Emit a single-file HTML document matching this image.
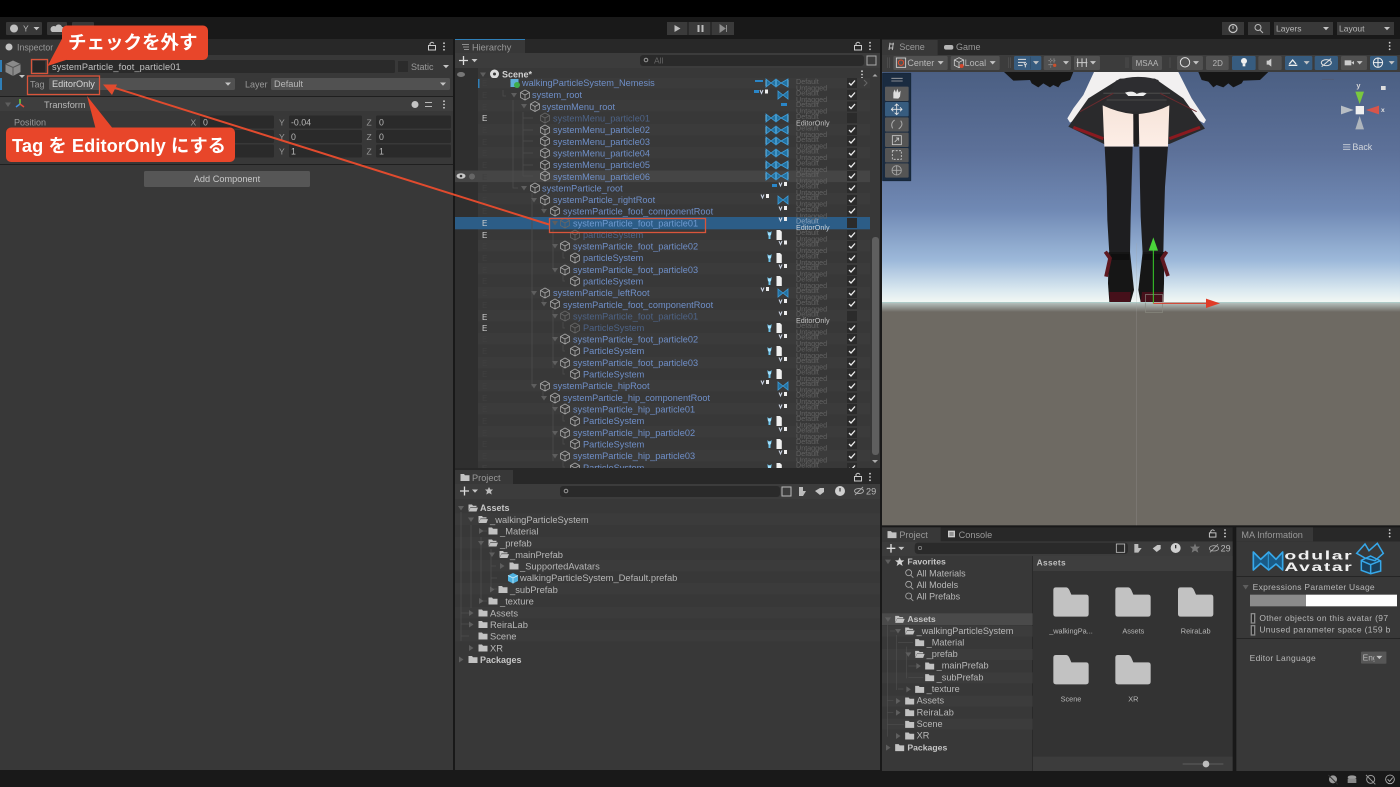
<!DOCTYPE html>
<html><head><meta charset="utf-8"><style>
html,body{margin:0;padding:0;background:#000;width:1400px;height:787px;overflow:hidden}
svg{display:block;filter:blur(.35px)}
text{font-family:"Liberation Sans","Noto Sans CJK JP",sans-serif;fill:#b8b8b8;font-size:9px;white-space:pre}
.b text,text.b{fill:#6f8fc8;font-size:9.200px}
.d text,text.d{fill:#4d6387;font-size:9.200px}
.t text{fill:#626262;font-size:7.200px}
.w{fill:#c2c2c2}
.g{fill:#999}
</style></head><body>
<svg width="1400" height="787" viewBox="0 0 1400 787" xmlns="http://www.w3.org/2000/svg">
<defs>
<symbol id="cube" overflow="visible"><path d="M0-5L4.500-2.500V2.500L0 5L-4.500 2.500V-2.500ZM-4.500-2.500L0 0L4.500-2.500M0 0V5" fill="none" stroke="#a6a6a6" stroke-width=".8"/></symbol>
<symbol id="cubed" overflow="visible"><path d="M0-5L4.500-2.500V2.500L0 5L-4.500 2.500V-2.500ZM-4.500-2.500L0 0L4.500-2.500M0 0V5" fill="none" stroke="#666" stroke-width=".8"/></symbol>
<symbol id="cb" overflow="visible"><rect x="-5" y="-5" width="10" height="10" fill="#2b2b2b"/><path d="M-3 0L-1 2L3-2.500" fill="none" stroke="#eee" stroke-width="1.300"/></symbol>
<symbol id="cu" overflow="visible"><rect x="-5" y="-5" width="10" height="10" fill="#2b2b2b"/></symbol>
<symbol id="bow2" overflow="visible"><path d="M-11-4L-6 0L-1-4L4 0L11-4V4L4 0L-1 4L-6 0L-11 4Z" fill="#22709f" stroke="#3f9fdc" stroke-width=".8"/><path d="M-11-3V3M11-3V3M-1-3V3" stroke="#6abcec" stroke-width="1"/></symbol>
<symbol id="bow" overflow="visible"><path d="M-5-4L0 0L5-4V4L0 0L-5 4Z" fill="#22709f" stroke="#3f9fdc" stroke-width=".8"/></symbol>
<symbol id="vd" overflow="visible"><path d="M-4-2.500L-2.500 1L-1-2.500" fill="none" stroke="#cfd8e8" stroke-width="1"/><rect x="1" y="-3" width="3" height="4" fill="#eee"/></symbol>
<symbol id="yd" overflow="visible"><path d="M-9-4L-7-2L-5-4V-2L-6 0V4H-8V0L-9-2Z" fill="#6cc4ec" transform="translate(1.500 0)"/><circle cx="-5.500" cy="-1" r="1.700" fill="#9fe0ff"/><path d="M-1.500-5H2L3.800-3.200V5H-1.500Z" fill="#f0f0f0" transform="translate(3 0)"/></symbol>
<symbol id="fold" overflow="visible"><path d="M-4.500-3.500H-1L0-2.300H4.500V3.500H-4.500Z" fill="#c2c2c2"/></symbol>
<symbol id="fopen" overflow="visible"><path d="M-4.500-3.500H-1L0-2.300H3.500V-1H-2.500L-4.500 3ZM-4.500 3.500L-2.500-.4H5L3.500 3.500Z" fill="#c2c2c2"/></symbol>
<symbol id="td" overflow="visible"><path d="M-3-2H3L0 2.500Z" fill="#5e5e5e"/></symbol>
<symbol id="tr" overflow="visible"><path d="M-2-3V3L2.500 0Z" fill="#5e5e5e"/></symbol>
<symbol id="dd" overflow="visible"><path d="M-3-1.500H3L0 1.800Z" fill="#c4c4c4"/></symbol>
<symbol id="kb" overflow="visible"><circle cx="0" cy="-3.300" r=".9" fill="#d0d0d0"/><circle cx="0" cy="0" r=".9" fill="#d0d0d0"/><circle cx="0" cy="3.300" r=".9" fill="#d0d0d0"/></symbol>
<symbol id="lock" overflow="visible"><rect x="-3.500" y="-.5" width="7" height="4.500" fill="none" stroke="#ccc"/><path d="M-2-.5V-2.500Q0-5 2-2.500" fill="none" stroke="#ccc"/></symbol>
<clipPath id="hc"><rect x="455" y="78" width="425" height="390"/></clipPath>
<linearGradient id="sky" x1="0" y1="0" x2="0" y2="1"><stop offset="0" stop-color="#4b5f83"/><stop offset=".35" stop-color="#5d7199"/><stop offset=".6" stop-color="#7089b4"/><stop offset=".82" stop-color="#9db9da"/><stop offset=".95" stop-color="#dbe9f0"/><stop offset="1" stop-color="#f2f7f4"/></linearGradient>
<linearGradient id="gr" x1="0" y1="0" x2="0" y2="1"><stop offset="0" stop-color="#bcc8c6"/><stop offset="1" stop-color="#6e6a63"/></linearGradient>
<linearGradient id="sk" x1="0" y1="0" x2="0" y2="1"><stop offset="0" stop-color="#f6e4da"/><stop offset="1" stop-color="#fdeee6"/></linearGradient>
</defs>

<rect width="1400" height="787" fill="#191919"/>
<rect width="1400" height="17" fill="#000"/>

<!-- top toolbar -->
<rect x="6" y="22" width="36" height="13" rx="1" fill="#383838"/><circle cx="14" cy="28.500" r="4" fill="#c0c0c0"/><text x="23" y="31.500" style="font-size:8.500px" fill="#aaa">Y</text><use href="#dd" x="36.500" y="28.500"/>
<rect x="47" y="22" width="20" height="13" rx="1" fill="#383838"/><path d="M52 32h10a2.500 2.500 0 0 0 0-5a3.500 3.500 0 0 0-6.500-.5a2.800 2.800 0 0 0-3.500 5.500z" fill="#c0c0c0"/>
<rect x="72" y="22" width="22" height="13" rx="1" fill="#383838"/>
<rect x="667" y="22" width="67" height="13" fill="#3a3a3a"/><path d="M688 22v13M711 22v13" stroke="#191919"/>
<path d="M674.500 25v7l6-3.500z" fill="#bdbdbd"/><path d="M698.500 25v7M702.500 25v7" stroke="#bdbdbd" stroke-width="2"/><path d="M720 25v7l5-3.500zM726.500 25v7" fill="#8c8c8c" stroke="#8c8c8c"/>
<rect x="1222" y="22" width="22" height="13" fill="#383838"/><circle cx="1233" cy="28.500" r="4" fill="none" stroke="#c4c4c4" stroke-width="1.200"/><path d="M1233 26v3" stroke="#c4c4c4"/>
<rect x="1248" y="22" width="22" height="13" fill="#383838"/><circle cx="1258" cy="27.500" r="3" fill="none" stroke="#bbb"/><path d="M1260 30l3 3" stroke="#bbb"/>
<rect x="1274" y="22" width="59" height="13" fill="#383838"/><text x="1276" y="31.500" style="font-size:8.500px">Layers</text><use href="#dd" x="1326" y="28.500"/>
<rect x="1337" y="22" width="57" height="13" fill="#383838"/><text x="1339" y="31.500" style="font-size:8.500px">Layout</text><use href="#dd" x="1387" y="28.500"/>

<!-- inspector -->
<rect x="0" y="39" width="453" height="731" fill="#383838"/>
<rect x="0" y="39" width="453" height="16" fill="#282828"/>
<rect x="0" y="40" width="62" height="15" fill="#383838"/>
<circle cx="9" cy="47" r="3.500" fill="#c4c4c4"/>
<text x="17" y="50.500" style="font-size:8.800px" class="g">Inspector</text>
<use href="#lock" x="432" y="46"/><use href="#kb" x="444" y="46.500"/>
<rect x="0" y="60" width="2" height="12" fill="#2f7fb8"/><rect x="0" y="78" width="2" height="12" fill="#2f7fb8"/>
<path d="M13 60.500l7.500 3.500v8l-7.500 4l-7.500-4v-8z" fill="#8a8a8a"/><path d="M5.500 64l7.500 3.500l7.500-3.500M13 67.500v8.500" stroke="#555" fill="none"/>
<path d="M19 75h6l-3 3z" fill="#c4c4c4"/>
<rect x="33" y="61" width="12" height="11" fill="#262626"/>
<rect x="49" y="60" width="346" height="13" rx="1.500" fill="#2a2a2a"/>
<text x="52" y="70" style="font-size:9.200px;letter-spacing:.12px" class="w">systemParticle_foot_particle01</text>
<rect x="398" y="61" width="10" height="11" fill="#2b2b2b"/>
<text x="411" y="70" style="font-size:9px" class="g">Static</text><use href="#dd" x="446" y="66.500"/>
<text x="30" y="87.500" style="font-size:9px" class="g">Tag</text>
<rect x="49" y="78" width="186" height="12" rx="1.500" fill="#515151"/>
<text x="52" y="87" style="font-size:9.200px;fill:#d8d8d8">EditorOnly</text><use href="#dd" x="228" y="84"/>
<text x="245" y="87.500" style="font-size:9px" class="g">Layer</text>
<rect x="271" y="78" width="179" height="12" rx="1.500" fill="#515151"/>
<text x="274" y="87" style="font-size:9.200px">Default</text><use href="#dd" x="443" y="84"/>
<rect x="0" y="96" width="453" height="1" fill="#1f1f1f"/>
<rect x="0" y="97" width="453" height="14" fill="#3e3e3e"/>
<use href="#td" x="8" y="104.500"/>
<path d="M20 99v5" stroke="#6fcf3c" stroke-width="1.500"/><path d="M20 104l-4 3" stroke="#3f8fe0" stroke-width="1.500"/><path d="M20 104l4 3" stroke="#e04a3c" stroke-width="1.500"/>
<text x="44" y="108" style="font-size:9.200px">Transform</text>
<circle cx="415" cy="104.500" r="3.500" fill="#c4c4c4"/><path d="M425 102.500h7M425 106.500h7" stroke="#b8b8b8"/><use href="#kb" x="444" y="104.500"/>
<text x="14" y="125.500" style="font-size:9px" class="g">Position</text>
<g fill="#2a2a2a">
<rect x="200" y="115.500" width="74" height="13" rx="1.500"/><rect x="289" y="115.500" width="73" height="13" rx="1.500"/><rect x="376" y="115.500" width="75" height="13" rx="1.500"/>
<rect x="200" y="130" width="74" height="13" rx="1.500"/><rect x="289" y="130" width="73" height="13" rx="1.500"/><rect x="376" y="130" width="75" height="13" rx="1.500"/>
<rect x="200" y="144.500" width="74" height="13" rx="1.500"/><rect x="289" y="144.500" width="73" height="13" rx="1.500"/><rect x="376" y="144.500" width="75" height="13" rx="1.500"/>
</g>
<text x="190.500" y="125.500" style="font-size:8.500px" class="g">X</text><text x="203" y="125.500" style="font-size:8.800px">0</text>
<text x="279" y="125.500" style="font-size:8.500px" class="g">Y</text><text x="291" y="125.500" style="font-size:8.800px">-0.04</text>
<text x="366.500" y="125.500" style="font-size:8.500px" class="g">Z</text><text x="379" y="125.500" style="font-size:8.800px">0</text>
<text x="279" y="140" style="font-size:8.500px" class="g">Y</text><text x="291" y="140" style="font-size:8.800px">0</text>
<text x="366.500" y="140" style="font-size:8.500px" class="g">Z</text><text x="379" y="140" style="font-size:8.800px">0</text>
<text x="279" y="154.500" style="font-size:8.500px" class="g">Y</text><text x="291" y="154.500" style="font-size:8.800px">1</text>
<text x="366.500" y="154.500" style="font-size:8.500px" class="g">Z</text><text x="379" y="154.500" style="font-size:8.800px">1</text>
<rect x="0" y="164" width="453" height="1" fill="#1f1f1f"/>
<rect x="144" y="171" width="166" height="16" rx="1.500" fill="#565656"/>
<text x="227" y="182" text-anchor="middle" style="font-size:9.200px;fill:#c8c8c8">Add Component</text>

<!-- hierarchy -->
<rect x="455" y="39" width="425" height="431" fill="#383838"/>
<rect x="455" y="39" width="425" height="14" fill="#282828"/>
<rect x="455" y="40" width="70" height="13" fill="#383838"/><rect x="455" y="39" width="70" height="1" fill="#2f7fb8"/>
<path d="M462 44.500h7M463 47h6M464 49.500h5" stroke="#aaa" stroke-width=".8"/>
<text x="472" y="50.500" style="font-size:9.200px" class="g">Hierarchy</text>
<use href="#lock" x="858" y="46"/><use href="#kb" x="870" y="46"/>
<rect x="455" y="53" width="425" height="15" fill="#3c3c3c"/>
<path d="M459 60.500h9M463.500 56v9" stroke="#ddd" stroke-width="1.300"/><use href="#dd" x="474.500" y="60.500"/>
<rect x="640" y="55" width="224" height="11" rx="3" fill="#2a2a2a"/>
<circle cx="646" cy="60" r="1.800" fill="none" stroke="#999"/><text x="654" y="63.500" style="font-size:8.500px;fill:#666">All</text>
<rect x="867" y="56" width="9" height="9" fill="none" stroke="#aaa"/>
<rect x="455" y="68" width="425" height="10" fill="#383838"/>
<rect x="455" y="68" width="23" height="402" fill="#2f2f2f"/>
<ellipse cx="461" cy="74.500" rx="4" ry="2.500" fill="#777"/>
<use href="#td" x="483" y="74.500"/>
<circle cx="494.500" cy="74" r="4.500" fill="#ddd"/><circle cx="494.500" cy="74" r="1.500" fill="#383838"/>
<text x="502" y="77.500" style="font-size:9px;fill:#d2d2d2;font-weight:bold">Scene*</text>
<use href="#kb" x="862" y="74.500"/>
<path d="M875 74l-2.500 2.500h5z" fill="#aaa"/>
<rect x="872" y="237" width="7" height="218" rx="3" fill="#5f5f5f"/>
<path d="M872 460h6l-3 3z" fill="#aaa"/>

<g clip-path="url(#hc)">
<g fill="#3b3b3b">
<rect x="478" y="77" width="392" height="11.600"/><rect x="478" y="100" width="392" height="11.600"/><rect x="478" y="124" width="392" height="11.600"/><rect x="478" y="147" width="392" height="11.600"/><rect x="478" y="193" width="392" height="11.600"/><rect x="478" y="240" width="392" height="11.600"/><rect x="478" y="263" width="392" height="11.600"/><rect x="478" y="287" width="392" height="11.600"/><rect x="478" y="310" width="392" height="11.600"/><rect x="478" y="333" width="392" height="11.600"/><rect x="478" y="357" width="392" height="11.600"/><rect x="478" y="380" width="392" height="11.600"/><rect x="478" y="403" width="392" height="11.600"/><rect x="478" y="426" width="392" height="11.600"/><rect x="478" y="450" width="392" height="11.600"/>
</g>
<rect x="455" y="170.500" width="415" height="11.600" fill="#454545"/>
<rect x="455" y="217" width="415" height="12.300" fill="#2c5d87"/>
<rect x="478" y="79" width="1.500" height="9" fill="#2f7fb8"/>
<path d="M503 90v6h3M523 106h3M523 118h10M523 130h10M523 141h10M523 153h10M523 165h10M523 176h10M523 112v64M513 100v88h5M532 193v6h2M543 205v6h2M553 229v40M553 246h2M553 269h2M563 252v6h2M563 275v6h2M532 200v93h3M543 298v6h2M553 310v58M553 316h2M553 339h2M553 363h2M563 322v6h2M563 345v6h2M563 368v6h2M532 293v93h3M543 391v7h2M553 403v58M553 409h2M553 433h2M553 456h2M563 415v6h2M563 438v6h2M563 461v6h2" fill="none" stroke="#4e4e4e" stroke-width=".8"/>
<use href="#td" x="513" y="83"/><use href="#td" x="514" y="95"/><use href="#td" x="524" y="106"/><use href="#td" x="524" y="188"/><use href="#td" x="534" y="200"/><use href="#td" x="544" y="211"/><use href="#td" x="555" y="223"/><use href="#td" x="555" y="246"/><use href="#td" x="555" y="270"/><use href="#td" x="534" y="293"/><use href="#td" x="544" y="304"/><use href="#td" x="555" y="316"/><use href="#td" x="555" y="339"/><use href="#td" x="555" y="363"/><use href="#td" x="534" y="386"/><use href="#td" x="544" y="398"/><use href="#td" x="555" y="409"/><use href="#td" x="555" y="433"/><use href="#td" x="555" y="456"/>
<rect x="510.500" y="79" width="8" height="8" fill="#5fb0d8"/><circle cx="517" cy="85" r="3" fill="#3fae4a"/>
<use href="#cube" x="525" y="95"/><use href="#cube" x="535" y="106.500"/><use href="#cubed" x="545" y="118"/><use href="#cube" x="545" y="130"/><use href="#cube" x="545" y="141"/><use href="#cube" x="545" y="153"/><use href="#cube" x="545" y="165"/><use href="#cube" x="545" y="176"/><use href="#cube" x="535" y="188"/><use href="#cube" x="545" y="200"/><use href="#cube" x="555" y="211"/><use href="#cubed" x="565" y="223"/><use href="#cubed" x="575" y="235"/><use href="#cube" x="565" y="246"/><use href="#cube" x="575" y="258"/><use href="#cube" x="565" y="270"/><use href="#cube" x="575" y="281"/><use href="#cube" x="545" y="293"/><use href="#cube" x="555" y="304"/><use href="#cubed" x="565" y="316"/><use href="#cubed" x="575" y="328"/><use href="#cube" x="565" y="339"/><use href="#cube" x="575" y="351"/><use href="#cube" x="565" y="363"/><use href="#cube" x="575" y="374"/><use href="#cube" x="545" y="386"/><use href="#cube" x="555" y="398"/><use href="#cube" x="565" y="409"/><use href="#cube" x="575" y="421"/><use href="#cube" x="565" y="433"/><use href="#cube" x="575" y="444"/><use href="#cube" x="565" y="456"/><use href="#cube" x="575" y="468"/>
<g class="b">
<text x="522" y="86">walkingParticleSystem_Nemesis</text>
<text x="532" y="98">system_root</text>
<text x="542" y="110">systemMenu_root</text>
<text x="553" y="133">systemMenu_particle02</text>
<text x="553" y="145">systemMenu_particle03</text>
<text x="553" y="156.500">systemMenu_particle04</text>
<text x="553" y="168">systemMenu_particle05</text>
<text x="553" y="180">systemMenu_particle06</text>
<text x="542" y="191.500">systemParticle_root</text>
<text x="553" y="203">systemParticle_rightRoot</text>
<text x="563" y="214.500">systemParticle_foot_componentRoot</text>
<text x="573" y="249.500">systemParticle_foot_particle02</text>
<text x="583" y="261">particleSystem</text>
<text x="573" y="273">systemParticle_foot_particle03</text>
<text x="583" y="284.500">particleSystem</text>
<text x="553" y="296">systemParticle_leftRoot</text>
<text x="563" y="308">systemParticle_foot_componentRoot</text>
<text x="573" y="342.500">systemParticle_foot_particle02</text>
<text x="583" y="354">ParticleSystem</text>
<text x="573" y="366">systemParticle_foot_particle03</text>
<text x="583" y="377.500">ParticleSystem</text>
<text x="553" y="389">systemParticle_hipRoot</text>
<text x="563" y="401">systemParticle_hip_componentRoot</text>
<text x="573" y="412.500">systemParticle_hip_particle01</text>
<text x="583" y="424">ParticleSystem</text>
<text x="573" y="436">systemParticle_hip_particle02</text>
<text x="583" y="447.500">ParticleSystem</text>
<text x="573" y="459">systemParticle_hip_particle03</text>
<text x="583" y="471">ParticleSystem</text>
</g>
<g class="d">
<text x="553" y="121.500">systemMenu_particle01</text>
<text x="583" y="238">particleSystem</text>
<text x="573" y="319.500">systemParticle_foot_particle01</text>
<text x="583" y="331">ParticleSystem</text>
</g>
<text x="573" y="226.500" style="font-size:9.200px;fill:#6f9ad0">systemParticle_foot_particle01</text>
<use href="#bow2" x="777" y="83"/><use href="#bow2" x="777" y="118"/><use href="#bow2" x="777" y="130"/><use href="#bow2" x="777" y="141"/><use href="#bow2" x="777" y="153"/><use href="#bow2" x="777" y="165"/><use href="#bow2" x="777" y="176"/>
<use href="#bow" x="783" y="95"/><use href="#bow" x="783" y="200"/><use href="#bow" x="783" y="293"/><use href="#bow" x="783" y="386"/>
<rect x="781" y="103" width="6" height="3" fill="#2a86c8"/>
<rect x="755" y="80" width="8" height="2" fill="#2a86c8"/><use href="#vd" x="764" y="92.500"/><rect x="754" y="90" width="5" height="3" fill="#2a86c8"/>
<use href="#vd" x="783" y="185"/><rect x="772" y="184" width="5" height="3" fill="#2a86c8"/>
<use href="#vd" x="765" y="197"/><use href="#vd" x="783" y="209"/><use href="#vd" x="783" y="220"/><use href="#vd" x="783" y="243.500"/><use href="#vd" x="783" y="267"/><use href="#vd" x="765" y="290"/><use href="#vd" x="783" y="302"/><use href="#vd" x="783" y="314"/><use href="#vd" x="783" y="337"/><use href="#vd" x="783" y="360"/><use href="#vd" x="765" y="383"/><use href="#vd" x="783" y="395"/><use href="#vd" x="783" y="407"/><use href="#vd" x="783" y="430"/><use href="#vd" x="783" y="453"/>
<use href="#yd" x="775" y="235"/><use href="#yd" x="775" y="258"/><use href="#yd" x="775" y="281"/><use href="#yd" x="775" y="328"/><use href="#yd" x="775" y="351"/><use href="#yd" x="775" y="374"/><use href="#yd" x="775" y="421"/><use href="#yd" x="775" y="444"/><use href="#yd" x="775" y="468"/>
<g class="t">
<text x="796" y="84">Default</text><text x="796" y="90.500">Untagged</text>
<text x="796" y="95.600">Default</text><text x="796" y="102.100">Untagged</text>
<text x="796" y="107.200">Default</text><text x="796" y="113.700">Untagged</text>
<text x="796" y="118.900">Default</text><text x="796" y="125.400" style="font-size:7.200px;fill:#c4c4c4">EditorOnly</text>
<text x="796" y="130.500">Default</text><text x="796" y="137">Untagged</text>
<text x="796" y="142.100">Default</text><text x="796" y="148.600">Untagged</text>
<text x="796" y="153.700">Default</text><text x="796" y="160.200">Untagged</text>
<text x="796" y="165.300">Default</text><text x="796" y="171.800">Untagged</text>
<text x="796" y="177">Default</text><text x="796" y="183.500">Untagged</text>
<text x="796" y="188.600">Default</text><text x="796" y="195.100">Untagged</text>
<text x="796" y="200.200">Default</text><text x="796" y="206.700">Untagged</text>
<text x="796" y="211.800">Default</text><text x="796" y="218.300">Untagged</text>
<text x="796" y="223.400" style="font-size:7.200px;fill:#8ea6bf">Default</text><text x="796" y="229.900" style="font-size:7.200px;fill:#c8d0d8">EditorOnly</text>
<text x="796" y="235.100">Default</text><text x="796" y="241.600">Untagged</text>
<text x="796" y="246.700">Default</text><text x="796" y="253.200">Untagged</text>
<text x="796" y="258.300">Default</text><text x="796" y="264.800">Untagged</text>
<text x="796" y="269.900">Default</text><text x="796" y="276.400">Untagged</text>
<text x="796" y="281.500">Default</text><text x="796" y="288">Untagged</text>
<text x="796" y="293.200">Default</text><text x="796" y="299.700">Untagged</text>
<text x="796" y="304.800">Default</text><text x="796" y="311.300">Untagged</text>
<text x="796" y="316.400">Default</text><text x="796" y="322.900" style="font-size:7.200px;fill:#c4c4c4">EditorOnly</text>
<text x="796" y="328">Default</text><text x="796" y="334.500">Untagged</text>
<text x="796" y="339.600">Default</text><text x="796" y="346.100">Untagged</text>
<text x="796" y="351.300">Default</text><text x="796" y="357.800">Untagged</text>
<text x="796" y="362.900">Default</text><text x="796" y="369.400">Untagged</text>
<text x="796" y="374.500">Default</text><text x="796" y="381">Untagged</text>
<text x="796" y="386.100">Default</text><text x="796" y="392.600">Untagged</text>
<text x="796" y="397.700">Default</text><text x="796" y="404.200">Untagged</text>
<text x="796" y="409.400">Default</text><text x="796" y="415.900">Untagged</text>
<text x="796" y="421">Default</text><text x="796" y="427.500">Untagged</text>
<text x="796" y="432.600">Default</text><text x="796" y="439.100">Untagged</text>
<text x="796" y="444.200">Default</text><text x="796" y="450.700">Untagged</text>
<text x="796" y="455.800">Default</text><text x="796" y="462.300">Untagged</text>
<text x="796" y="467.500">Default</text>
</g>
<use href="#cb" x="852" y="83"/><use href="#cb" x="852" y="95"/><use href="#cb" x="852" y="106.500"/><use href="#cu" x="852" y="118"/><use href="#cb" x="852" y="130"/><use href="#cb" x="852" y="141"/><use href="#cb" x="852" y="153"/><use href="#cb" x="852" y="165"/><use href="#cb" x="852" y="176"/><use href="#cb" x="852" y="188"/><use href="#cb" x="852" y="200"/><use href="#cb" x="852" y="211"/><use href="#cu" x="852" y="223"/><use href="#cb" x="852" y="235"/><use href="#cb" x="852" y="246"/><use href="#cb" x="852" y="258"/><use href="#cb" x="852" y="270"/><use href="#cb" x="852" y="281"/><use href="#cb" x="852" y="293"/><use href="#cb" x="852" y="304"/><use href="#cu" x="852" y="316"/><use href="#cb" x="852" y="328"/><use href="#cb" x="852" y="339"/><use href="#cb" x="852" y="351"/><use href="#cb" x="852" y="363"/><use href="#cb" x="852" y="374"/><use href="#cb" x="852" y="386"/><use href="#cb" x="852" y="398"/><use href="#cb" x="852" y="409"/><use href="#cb" x="852" y="421"/><use href="#cb" x="852" y="433"/><use href="#cb" x="852" y="444"/><use href="#cb" x="852" y="456"/><use href="#cb" x="852" y="468"/>
<path d="M864 80l3 3l-3 3" fill="none" stroke="#666"/>
<text x="482" y="121" style="font-size:8px;fill:#cfcfcf">E</text><text x="482" y="226" style="font-size:8px;fill:#cfcfcf">E</text><text x="482" y="238" style="font-size:8px;fill:#cfcfcf">E</text><text x="482" y="320" style="font-size:8px;fill:#cfcfcf">E</text><text x="482" y="331" style="font-size:8px;fill:#cfcfcf">E</text>
<text style="font-size:8px;fill:#404040" x="482 482 482 482 482 482 482 482 482 482 482 482 482 482 482 482 482 482 482 482" y="86 98 110 133 145 156 168 180 191 203 214 249 261 273 284 296 308 342 354 366">EEEEEEEEEEEEEEEEEEEE</text>
<text style="font-size:8px;fill:#404040" x="482 482 482 482 482 482 482 482 482 482" y="377 389 401 412 424 436 447 459 471 471">EEEEEEEEEE</text>
</g>
<ellipse cx="461" cy="176" rx="4.500" ry="2.800" fill="#c8c8c8"/><circle cx="461" cy="176" r="1.300" fill="#333"/><circle cx="472" cy="176.500" r="3" fill="#666"/>
<rect x="453" y="39" width="2" height="731" fill="#191919"/><rect x="880" y="39" width="2" height="731" fill="#191919"/>

<!-- project mid -->
<rect x="455" y="468" width="425" height="302" fill="#383838"/>
<rect x="455" y="468" width="425" height="16" fill="#282828"/>
<rect x="455" y="470" width="58" height="14" fill="#383838"/>
<use href="#fold" x="465" y="477.500"/><text x="472" y="481" style="font-size:9.200px" class="g">Project</text>
<use href="#lock" x="858" y="477"/><use href="#kb" x="870" y="477"/>
<rect x="455" y="484" width="425" height="15" fill="#3c3c3c"/>
<path d="M460 491h9M464.500 486.500v9" stroke="#ddd" stroke-width="1.300"/><use href="#dd" x="475" y="491"/>
<path d="M489 487l1.300 2.500h2.700l-2 2l.7 3l-2.700-1.500l-2.700 1.500l.7-3l-2-2h2.700z" fill="#bbb"/>
<rect x="560" y="486" width="220" height="11" rx="3" fill="#2a2a2a"/><circle cx="566" cy="491" r="1.800" fill="none" stroke="#999"/>
<rect x="782" y="487" width="9" height="9" fill="none" stroke="#bbb"/>
<path d="M799 487h4v4h3l-3 5h-4z" fill="#bbb"/><path d="M815 491l5-3h4v4l-4 3z" fill="#c4c4c4"/><circle cx="840" cy="491" r="5" fill="#d0d0d0"/><path d="M840 488v3.500" stroke="#333" stroke-width="1.200"/>
<ellipse cx="859" cy="491" rx="4.500" ry="2.500" fill="none" stroke="#aaa"/><path d="M855 495l8-8" stroke="#aaa"/>
<text x="866" y="494.500" style="font-size:9.200px">29</text>
<g fill="#3b3b3b"><rect x="455" y="513.500" width="425" height="11.600"/><rect x="455" y="537" width="425" height="11.600"/><rect x="455" y="560" width="425" height="11.600"/><rect x="455" y="583" width="425" height="11.600"/><rect x="455" y="607" width="425" height="11.600"/><rect x="455" y="630" width="425" height="11.600"/></g>
<path d="M461 512v129M471 525v83M481 537v66M491 549v43M481 531h6M481 601h6M491 566h5M491 578h6M491 589h6M461 613h8M461 624h8M461 636h8" stroke="#4e4e4e" stroke-width=".8" fill="none"/>
<use href="#td" x="461" y="508"/><use href="#fopen" x="473" y="508"/><text x="480" y="511" style="font-size:9px;font-weight:bold;fill:#c6c6c6">Assets</text>
<use href="#td" x="471" y="519.500"/><use href="#fopen" x="483" y="519.500"/><text x="490" y="523" style="font-size:9.350px">_walkingParticleSystem</text>
<use href="#tr" x="481" y="531"/><use href="#fold" x="493" y="531"/><text x="500" y="534.500" style="font-size:9.350px">_Material</text>
<use href="#td" x="481" y="543"/><use href="#fopen" x="493" y="543"/><text x="500" y="546.500" style="font-size:9.350px">_prefab</text>
<use href="#td" x="492" y="554.500"/><use href="#fopen" x="504" y="554.500"/><text x="510" y="558" style="font-size:9.350px">_mainPrefab</text>
<use href="#tr" x="502" y="566"/><use href="#fold" x="514" y="566"/><text x="520" y="569.500" style="font-size:9.350px">_SupportedAvatars</text>
<path d="M513 573l5 2.500v5.500l-5 2.500l-5-2.500v-5.500z" fill="#4fb2e0"/><path d="M508 575.500l5 2.500l5-2.500M513 578v5.500" stroke="#d4f0fb" fill="none" stroke-width=".7"/><text x="520" y="581" style="font-size:9.350px">walkingParticleSystem_Default.prefab</text>
<use href="#tr" x="492" y="589.500"/><use href="#fold" x="503" y="589.500"/><text x="510" y="593" style="font-size:9.350px">_subPrefab</text>
<use href="#tr" x="481" y="601"/><use href="#fold" x="493" y="601"/><text x="500" y="604.500" style="font-size:9.350px">_texture</text>
<use href="#tr" x="471" y="613"/><use href="#fold" x="483" y="613"/><text x="490" y="616.500" style="font-size:9.350px">Assets</text>
<use href="#tr" x="471" y="624.500"/><use href="#fold" x="483" y="624.500"/><text x="490" y="628" style="font-size:9.350px">ReiraLab</text>
<use href="#fold" x="483" y="636"/><text x="490" y="639.500" style="font-size:9.350px">Scene</text>
<use href="#tr" x="471" y="648"/><use href="#fold" x="483" y="648"/><text x="490" y="651.500" style="font-size:9.350px">XR</text>
<use href="#tr" x="461" y="659.500"/><use href="#fold" x="473" y="659.500"/><text x="480" y="663" style="font-size:9px;font-weight:bold;fill:#c6c6c6">Packages</text>

<!-- scene (coordinates at 3x) -->
<g transform="translate(880 30) scale(.33333)">
<rect x="6" y="27" width="1554" height="48" fill="#282828"/>
<rect x="6" y="30" width="167" height="45" fill="#383838"/>
<path d="M28 42h14M26 54h14M30 38l-3 22M40 38l-3 22" stroke="#bbb" stroke-width="3" fill="none"/>
<text x="58" y="60" style="font-size:27px" class="g">Scene</text>
<rect x="192" y="45" width="28" height="14" rx="6" fill="#b5b5b5"/>
<text x="228" y="60" style="font-size:27px" class="g">Game</text>
<use href="#kb" transform="translate(1529 48) scale(3)"/>
<rect x="6" y="75" width="1554" height="51" fill="#3c3c3c"/>
<path d="M22 82v32M28 82v32M385 82v32M391 82v32M738 82v32M744 82v32M870 82v32" stroke="#555" stroke-width="2"/>
<g fill="#515151"><rect x="40" y="78" width="163" height="42" rx="4"/><rect x="212" y="78" width="147" height="42" rx="4"/><rect x="491" y="78" width="82" height="42" rx="4"/><rect x="582" y="78" width="78" height="42" rx="4"/><rect x="756" y="78" width="90" height="42" rx="4"/><rect x="891" y="78" width="78" height="42" rx="4"/><rect x="978" y="78" width="68" height="42" rx="4"/><rect x="1135" y="78" width="70" height="42" rx="4"/><rect x="1383" y="78" width="78" height="42" rx="4"/></g>
<g fill="#375c7f"><rect x="402" y="78" width="82" height="42" rx="4"/><rect x="1056" y="78" width="71" height="42" rx="4"/><rect x="1215" y="78" width="82" height="42" rx="4"/><rect x="1304" y="78" width="70" height="42" rx="4"/><rect x="1470" y="78" width="82" height="42" rx="4"/></g>
<rect x="49" y="84" width="28" height="28" fill="none" stroke="#d8d8d8" stroke-width="2.500"/><circle cx="63" cy="98" r="8" fill="none" stroke="#e04a2a" stroke-width="3"/>
<text x="82" y="108" style="font-size:27px">Center</text><use href="#dd" transform="translate(182 98) scale(3)"/>
<path d="M237 83l14 7v16l-14 7l-14-7v-16zM223 90l14 7l14-7M237 97v16" fill="none" stroke="#ccc" stroke-width="2.500"/><circle cx="245" cy="108" r="6" fill="#d4472c"/>
<text x="254" y="108" style="font-size:27px">Local</text><use href="#dd" transform="translate(338 98) scale(3)"/>
<path d="M414 88h24M414 97h24M414 106h14M432 100l4 6l4-6M436 106v6" stroke="#ddd" stroke-width="3" fill="none"/><use href="#dd" transform="translate(468 98) scale(3)"/>
<path d="M452 80v38" stroke="#2f4c68" stroke-width="2"/>
<path d="M505 92h24M505 104h14M512 85v28M522 85v14" stroke="#888" stroke-width="3" stroke-dasharray="5 3"/><circle cx="524" cy="106" r="5" fill="#c8502e"/><use href="#dd" transform="translate(558 98) scale(3)"/>
<path d="M593 85v26M606 85v26M619 85v26M590 98h32" stroke="#ccc" stroke-width="3"/><use href="#dd" transform="translate(639 98) scale(3)"/>
<text x="767" y="108" style="font-size:24px">MSAA</text>
<circle cx="915" cy="97" r="14" fill="none" stroke="#ddd" stroke-width="3"/><use href="#dd" transform="translate(948 98) scale(3)"/>
<text x="998" y="108" style="font-size:24px">2D</text>
<circle cx="1092" cy="93" r="9" fill="#f0f0f0"/><rect x="1088" y="102" width="8" height="7" fill="#f0f0f0"/>
<path d="M1160 92h6l8-6v24l-8-6h-6z" fill="#ccc"/>
<path d="M1228 102l10-12l10 12M1226 106h26" stroke="#eee" stroke-width="4" fill="none"/><use href="#dd" transform="translate(1280 98) scale(3)"/>
<ellipse cx="1339" cy="98" rx="15" ry="9" fill="none" stroke="#ddd" stroke-width="3"/><path d="M1325 110l28-24" stroke="#ddd" stroke-width="3"/>
<rect x="1394" y="91" width="20" height="15" fill="#ccc"/><path d="M1414 98l8-5v11z" fill="#ccc"/><use href="#dd" transform="translate(1439 98) scale(3)"/>
<circle cx="1494" cy="98" r="14" fill="none" stroke="#eee" stroke-width="3"/><path d="M1480 98h28M1494 84v28" stroke="#eee" stroke-width="3"/><use href="#dd" transform="translate(1535 98) scale(3)"/>
<rect x="6" y="126" width="1554" height="690" fill="url(#sky)"/>
<rect x="6" y="816" width="1554" height="30" fill="url(#gr)"/>
<rect x="6" y="846" width="1554" height="640" fill="#6e6a63"/>
<path d="M372 126H580L570 150L545 158L535 172L520 165L510 172L490 160L475 172L455 160L450 150L400 152Z" fill="#161616"/>
<path d="M955 126H1165L1140 150L1090 152L1085 160L1060 172L1045 160L1030 172L1010 165L1000 172L985 155L965 150Z" fill="#161616"/>
<path d="M642 126H895L935 205L978 270L972 280L920 250L870 228H668L620 250L570 278L562 265L580 235L610 195Z" fill="#f2f0f0"/>
<path d="M565 290L625 205L720 146L825 146L910 205L975 296L868 342L672 342Z" fill="#2a2a2c"/>
<path d="M708 152Q770 130 835 150L862 228Q770 262 668 228Z" fill="#2d2d30"/>
<path d="M680 210H860M670 190H870" stroke="#444" stroke-width="4"/>
<path d="M735 188Q760 180 770 192Q785 184 800 190L790 198H745Z" fill="#eee"/>
<path d="M580 292L670 326M868 326L960 292" stroke="#8a1a20" stroke-width="9"/>
<path d="M600 245L700 190M840 190L950 245" stroke="#6a2a2e" stroke-width="3"/>
<path d="M668 226Q715 248 760 252V350H673Z" fill="url(#sk)"/><path d="M776 252Q825 248 868 226L864 350H778Z" fill="url(#sk)"/>
<path d="M760 252H776V350H762Z" fill="#1f1f20"/>
<path d="M674 350H758L752 560L750 672H688L682 570L680 470Z" fill="#1e1e20"/>
<path d="M778 350H864L855 470L852 570L850 672H788L782 560L780 470Z" fill="#1e1e20"/>
<path d="M686 666H750L762 780L752 816H688L684 760Z" fill="#161616"/>
<path d="M788 666H853L852 760L850 816H782L775 780Z" fill="#161616"/>
<path d="M688 786H752L750 816H690ZM786 786H850V816H782Z" fill="#45101a"/>
<rect x="692" y="672" width="56" height="18" fill="#0f0f0f"/><rect x="790" y="672" width="58" height="18" fill="#0f0f0f"/>
<path d="M676 665L690 685L678 740M860 665L846 685L864 738" stroke="#5e1820" stroke-width="11" fill="none"/>
<rect x="796" y="794" width="52" height="53" fill="none" stroke="#8a8a80" stroke-width="2"/>
<path d="M769 640V1486" stroke="#a4a4a4" stroke-width="1.500" opacity=".45"/>
<path d="M6 817H1560" stroke="#a8d0cc" stroke-width="2"/>
<path d="M820 660V820" stroke="#39d02a" stroke-width="3"/><path d="M820 622L806 662H834Z" fill="#4ad43a"/>
<path d="M820 820H985" stroke="#d83a28" stroke-width="3.500"/><path d="M978 806L1020 820L978 834Z" fill="#e03c28"/>
<path d="M8 130H92V452H8Z" fill="#1a2b40" stroke="#17273a" stroke-width="3" stroke-linejoin="round"/>
<path d="M34 145H68M34 153H68" stroke="#aaa" stroke-width="2.500"/>
<g fill="#555"><rect x="15" y="170" width="71" height="43" rx="3" fill="#5a5a5a"/><rect x="15" y="216" width="71" height="43" rx="3" fill="#375c7f"/><rect x="15" y="262" width="71" height="43" rx="3"/><rect x="15" y="308" width="71" height="43" rx="3"/><rect x="15" y="354" width="71" height="43" rx="3"/><rect x="15" y="400" width="71" height="43" rx="3"/></g>
<path d="M40 205V188L44 178L48 188L52 176L56 188L62 182L60 200L55 206Z" fill="#ddd"/>
<path d="M50 222V254M34 238H66M44 228L50 222L56 228M44 248L50 254L56 248M40 232L34 238L40 244M60 232L66 238L60 244" stroke="#e8e8e8" stroke-width="2.500" fill="none"/>
<path d="M38 295Q30 280 44 270M62 272Q72 285 56 297" stroke="#aaa" stroke-width="3" fill="none"/>
<rect x="37" y="317" width="27" height="27" fill="none" stroke="#ccc" stroke-width="2.500"/><path d="M44 336L56 324M48 324H56V332" stroke="#ccc" stroke-width="2.500" fill="none"/>
<rect x="37" y="362" width="27" height="26" fill="none" stroke="#ccc" stroke-width="2.500" stroke-dasharray="6 4"/>
<circle cx="50" cy="421" r="14" fill="none" stroke="#aaa" stroke-width="2.500"/><path d="M36 421H64M50 407V435" stroke="#aaa" stroke-width="2.500"/>
<path d="M1326 148H1362" stroke="#556" stroke-width="2.500" opacity=".6"/>
<text x="1429" y="174" style="font-size:22px;font-weight:bold;fill:#d8d8d8">y</text>
<rect x="1503" y="168" width="14" height="12" fill="#ddd"/>
<rect x="1427" y="228" width="25" height="25" fill="#f0f0f0"/>
<path d="M1439 222L1426 185H1452Z" fill="#7ac83e"/>
<path d="M1439 258L1426 298H1452Z" fill="#aeb5bc"/>
<path d="M1421 240L1383 227V253Z" fill="#b8bec4"/>
<path d="M1458 240L1497 227V253Z" fill="#d8554a"/>
<text x="1503" y="246" style="font-size:20px;font-weight:bold;fill:#e0e0e0">x</text>
<path d="M1389 344H1411M1389 351H1411M1389 358H1411" stroke="#cfd4dc" stroke-width="2.500"/>
<text x="1417" y="360" style="font-size:27px;fill:#d2d6dc">Back</text>
</g>

<!-- bottom right (3x) -->
<g transform="translate(880 520) scale(.33333)">
<rect x="6" y="18" width="1554" height="735" fill="#191919"/>
<rect x="6" y="22" width="1052" height="42" fill="#282828"/>
<rect x="6" y="22" width="176" height="42" fill="#383838"/>
<rect x="1068" y="22" width="492" height="42" fill="#282828"/>
<rect x="1068" y="22" width="231" height="42" fill="#383838"/>
<use href="#fold" transform="translate(36 44) scale(3)"/><text x="58" y="54" style="font-size:27.500px" class="g">Project</text>
<rect x="204" y="32" width="21" height="20" fill="#ccc"/><path d="M208 39h13M208 45h13" stroke="#333" stroke-width="2.500"/><text x="236" y="54" style="font-size:27.500px" class="g">Console</text>
<use href="#lock" transform="translate(998 40) scale(2.800)"/><use href="#kb" transform="translate(1035 40) scale(3)"/>
<text x="1084" y="54" style="font-size:27.500px" class="g">MA Information</text><use href="#kb" transform="translate(1529 40) scale(3)"/>
<rect x="6" y="64" width="1052" height="44" fill="#3c3c3c"/>
<path d="M20 85h26M33 72v26" stroke="#ddd" stroke-width="4"/><use href="#dd" transform="translate(64 85) scale(3)"/>
<rect x="104" y="68" width="640" height="34" rx="10" fill="#2a2a2a"/><circle cx="120" cy="84" r="5" fill="none" stroke="#999" stroke-width="2"/>
<rect x="709" y="72" width="25" height="25" fill="none" stroke="#bbb" stroke-width="2.500"/>
<path d="M763 72h12v12h10l-10 14h-12z" fill="#bbb"/><path d="M818 85l14-10h10v12l-12 9z" fill="#c4c4c4"/><circle cx="887" cy="84" r="15" fill="#d0d0d0"/><path d="M887 75v10" stroke="#333" stroke-width="4"/>
<path d="M945 70l4 10h11l-8 7l3 11l-10-6l-10 6l3-11l-8-7h11z" fill="#777"/>
<ellipse cx="1002" cy="85" rx="14" ry="8" fill="none" stroke="#aaa" stroke-width="2.500"/><path d="M990 97l24-24" stroke="#aaa" stroke-width="2.500"/>
<text x="1022" y="95" style="font-size:27px">29</text>
<rect x="6" y="108" width="452" height="645" fill="#383838"/>
<rect x="458" y="108" width="600" height="601" fill="#333"/>
<rect x="458" y="108" width="600" height="45" fill="#3e3e3e"/>
<rect x="458" y="709" width="600" height="44" fill="#3c3c3c"/>
<rect x="456" y="108" width="3" height="645" fill="#2a2a2a"/>
<g fill="#3c3c3c"><rect x="6" y="317" width="452" height="33"/><rect x="6" y="387" width="452" height="33"/><rect x="6" y="457" width="452" height="33"/><rect x="6" y="527" width="452" height="33"/><rect x="6" y="596" width="452" height="33"/></g>
<rect x="6" y="280" width="452" height="35" fill="#4a4a4a"/>
<path d="M22 300v350M50 345v165M80 380v95M30 333h16M54 368h45M110 438h-25M85 473h45M54 507h16M22 542h18M22 578h18M22 613h50" stroke="#4e4e4e" stroke-width="2" fill="none"/>
<use href="#td" transform="translate(24 125) scale(3)"/>
<path d="M59 112l4 9h10l-8 7l3 10l-9-6l-9 6l3-10l-8-7h10z" fill="#d4d4d4"/>
<text x="82" y="134" style="font-size:26px;font-weight:bold;fill:#c6c6c6">Favorites</text>
<g fill="none" stroke="#aaa" stroke-width="2.500"><circle cx="86" cy="158" r="9"/><path d="M92 165l8 8"/><circle cx="86" cy="193" r="9"/><path d="M92 200l8 8"/><circle cx="86" cy="228" r="9"/><path d="M92 235l8 8"/></g>
<text x="110" y="169" style="font-size:27px">All Materials</text>
<text x="110" y="204" style="font-size:27px">All Models</text>
<text x="110" y="239" style="font-size:27px">All Prefabs</text>
<use href="#td" transform="translate(24 298) scale(3)"/><use href="#fopen" transform="translate(59 298) scale(3)"/>
<text x="82" y="306" style="font-size:26px;font-weight:bold;fill:#c6c6c6">Assets</text>
<use href="#td" transform="translate(54 333) scale(3)"/><use href="#fopen" transform="translate(89 333) scale(3)"/>
<text x="110" y="342" style="font-size:27.500px">_walkingParticleSystem</text>
<use href="#fold" transform="translate(119 368) scale(3)"/><text x="140" y="377" style="font-size:27.500px">_Material</text>
<use href="#td" transform="translate(85 403) scale(3)"/><use href="#fopen" transform="translate(119 403) scale(3)"/><text x="140" y="411" style="font-size:27.500px">_prefab</text>
<use href="#tr" transform="translate(115 438) scale(3)"/><use href="#fold" transform="translate(149 438) scale(3)"/><text x="170" y="446" style="font-size:27.500px">_mainPrefab</text>
<use href="#fold" transform="translate(149 473) scale(3)"/><text x="170" y="481" style="font-size:27.500px">_subPrefab</text>
<use href="#tr" transform="translate(85 508) scale(3)"/><use href="#fold" transform="translate(119 508) scale(3)"/><text x="140" y="516" style="font-size:27.500px">_texture</text>
<use href="#tr" transform="translate(54 543) scale(3)"/><use href="#fold" transform="translate(89 543) scale(3)"/><text x="110" y="551" style="font-size:27.500px">Assets</text>
<use href="#tr" transform="translate(54 578) scale(3)"/><use href="#fold" transform="translate(89 578) scale(3)"/><text x="110" y="586" style="font-size:27.500px">ReiraLab</text>
<use href="#fold" transform="translate(89 613) scale(3)"/><text x="110" y="621" style="font-size:27.500px">Scene</text>
<use href="#tr" transform="translate(54 648) scale(3)"/><use href="#fold" transform="translate(89 648) scale(3)"/><text x="110" y="656" style="font-size:27.500px">XR</text>
<use href="#tr" transform="translate(24 683) scale(3)"/><use href="#fold" transform="translate(59 683) scale(3)"/>
<text x="82" y="691" style="font-size:26px;font-weight:bold;fill:#c6c6c6">Packages</text>
<text x="470" y="137" style="font-size:25px;font-weight:bold;letter-spacing:1px;fill:#c0c0c0">Assets</text>
<g fill="#c2c2c2">
<path d="M520 210q0-8 8-8h30q6 0 10 8l6 14h44q8 0 8 8v50q0 8-8 8h-90q-8 0-8-8z"/>
<path d="M706 210q0-8 8-8h30q6 0 10 8l6 14h44q8 0 8 8v50q0 8-8 8h-90q-8 0-8-8z"/>
<path d="M894 210q0-8 8-8h30q6 0 10 8l6 14h44q8 0 8 8v50q0 8-8 8h-90q-8 0-8-8z"/>
<path d="M520 413q0-8 8-8h30q6 0 10 8l6 14h44q8 0 8 8v50q0 8-8 8h-90q-8 0-8-8z"/>
<path d="M706 413q0-8 8-8h30q6 0 10 8l6 14h44q8 0 8 8v50q0 8-8 8h-90q-8 0-8-8z"/>
</g>
<text x="573" y="341" text-anchor="middle" style="font-size:22px">_walkingPa...</text>
<text x="760" y="341" text-anchor="middle" style="font-size:22px">Assets</text>
<text x="947" y="341" text-anchor="middle" style="font-size:22px">ReiraLab</text>
<text x="573" y="545" text-anchor="middle" style="font-size:22px">Scene</text>
<text x="760" y="545" text-anchor="middle" style="font-size:22px">XR</text>
<path d="M908 732H1030" stroke="#6a6a6a" stroke-width="2.500"/><circle cx="978" cy="732" r="10" fill="#bdbdbd"/>
<rect x="1066" y="18" width="3" height="735" fill="#191919"/>
<rect x="1069" y="64" width="491" height="689" fill="#383838"/>
<rect x="1069" y="168" width="491" height="3" fill="#252525"/>
<rect x="1069" y="354" width="491" height="3" fill="#252525"/>
<path d="M1120 96V150L1142 130L1166 150V96L1142 118Z" fill="#1a5a85" stroke="#36a8ea" stroke-width="5" stroke-linejoin="round"/>
<path d="M1166 96L1188 118L1208 96V150L1188 132L1166 150" fill="#1a5a85" stroke="#36a8ea" stroke-width="5" stroke-linejoin="round"/>
<text x="1213" y="118" textLength="207" lengthAdjust="spacingAndGlyphs" style="font-size:36px;font-weight:bold;letter-spacing:3px;fill:#f0f0f0">odular</text>
<text x="1213" y="153" textLength="207" lengthAdjust="spacingAndGlyphs" style="font-size:36px;font-weight:bold;letter-spacing:3px;fill:#f0f0f0">Avatar</text>
<path d="M1472 108l30 15v30l-30 8l-28-10v-30z" fill="#1a3f5a" stroke="#36a8ea" stroke-width="4.500"/><path d="M1444 122l28 12l30-12M1472 134v26" stroke="#36a8ea" stroke-width="4.500" fill="none"/>
<path d="M1430 100l25-28l12 20l25-22l18 30l-25 22l-30-8z" fill="none" stroke="#36a8ea" stroke-width="4.500"/>
<use href="#td" transform="translate(1097 201) scale(3)"/>
<text x="1118" y="210" style="font-size:25.500px;letter-spacing:.8px">Expressions Parameter Usage</text>
<rect x="1110" y="224" width="168" height="35" fill="#8a8a8a"/><rect x="1278" y="224" width="273" height="35" fill="#fff"/>
<rect x="1112" y="279" width="14" height="32" fill="#8a8a8a"/><rect x="1116" y="283" width="6" height="24" fill="#2a2a2a"/>
<rect x="1112" y="315" width="14" height="32" fill="#8a8a8a"/><rect x="1116" y="319" width="6" height="24" fill="#2a2a2a"/>
<text x="1138" y="303" style="font-size:25.500px;letter-spacing:1px">Other objects on this avatar (97</text>
<text x="1138" y="338" style="font-size:25.500px;letter-spacing:1px">Unused parameter space (159 b</text>
<text x="1109" y="423" style="font-size:25.500px;letter-spacing:.8px">Editor Language</text>
<rect x="1443" y="395" width="76" height="36" rx="3" fill="#565656"/><text x="1448" y="422" style="font-size:25px">Eng</text><rect x="1483" y="395" width="36" height="36" fill="#565656"/><use href="#dd" transform="translate(1498 412) scale(3)"/>
<rect x="0" y="753" width="1560" height="48" fill="#191919"/>
<circle cx="1359" cy="778" r="12" fill="#999"/><path d="M1345 765l28 28" stroke="#333" stroke-width="3"/>
<ellipse cx="1416" cy="772" rx="13" ry="6" fill="#999"/><rect x="1403" y="776" width="26" height="13" fill="#888"/>
<circle cx="1472" cy="778" r="12" fill="none" stroke="#999" stroke-width="3"/><path d="M1458 765l28 28" stroke="#999" stroke-width="3"/>
<circle cx="1530" cy="778" r="13" fill="none" stroke="#bbb" stroke-width="2.500"/><path d="M1523 778l6 6l9-11" stroke="#bbb" stroke-width="2.500" fill="none"/>
</g>

<!-- annotations -->
<g fill="none" stroke="#d9553b" stroke-width="1.300">
<rect x="31.500" y="59.500" width="16" height="14"/>
<rect x="27.500" y="76" width="72" height="18.500"/>
<rect x="549.500" y="218.500" width="156" height="14"/>
</g>
<path d="M549 224.500L112 87" stroke="#e14b2e" stroke-width="2" fill="none"/>
<path d="M103 84.500L117 84.500L112 95Z" fill="#e14b2e"/>
<path d="M64 35L47.500 66L72 58Z" fill="#e8462a"/>
<rect x="62" y="25.500" width="146" height="34.500" rx="5" fill="#e8462a"/>
<path d="M96 130L87 96L114 130Z" fill="#e8462a"/>
<rect x="6" y="127.500" width="229" height="34.500" rx="5" fill="#e8462a"/>
<text x="68" y="49" style="font-size:18.500px;font-weight:bold;fill:#fff">チェックを外す</text>
<text x="12" y="152" textLength="214" style="font-size:18.200px;font-weight:bold;fill:#fff">Tag を EditorOnly にする</text>
</svg>
</body></html>
